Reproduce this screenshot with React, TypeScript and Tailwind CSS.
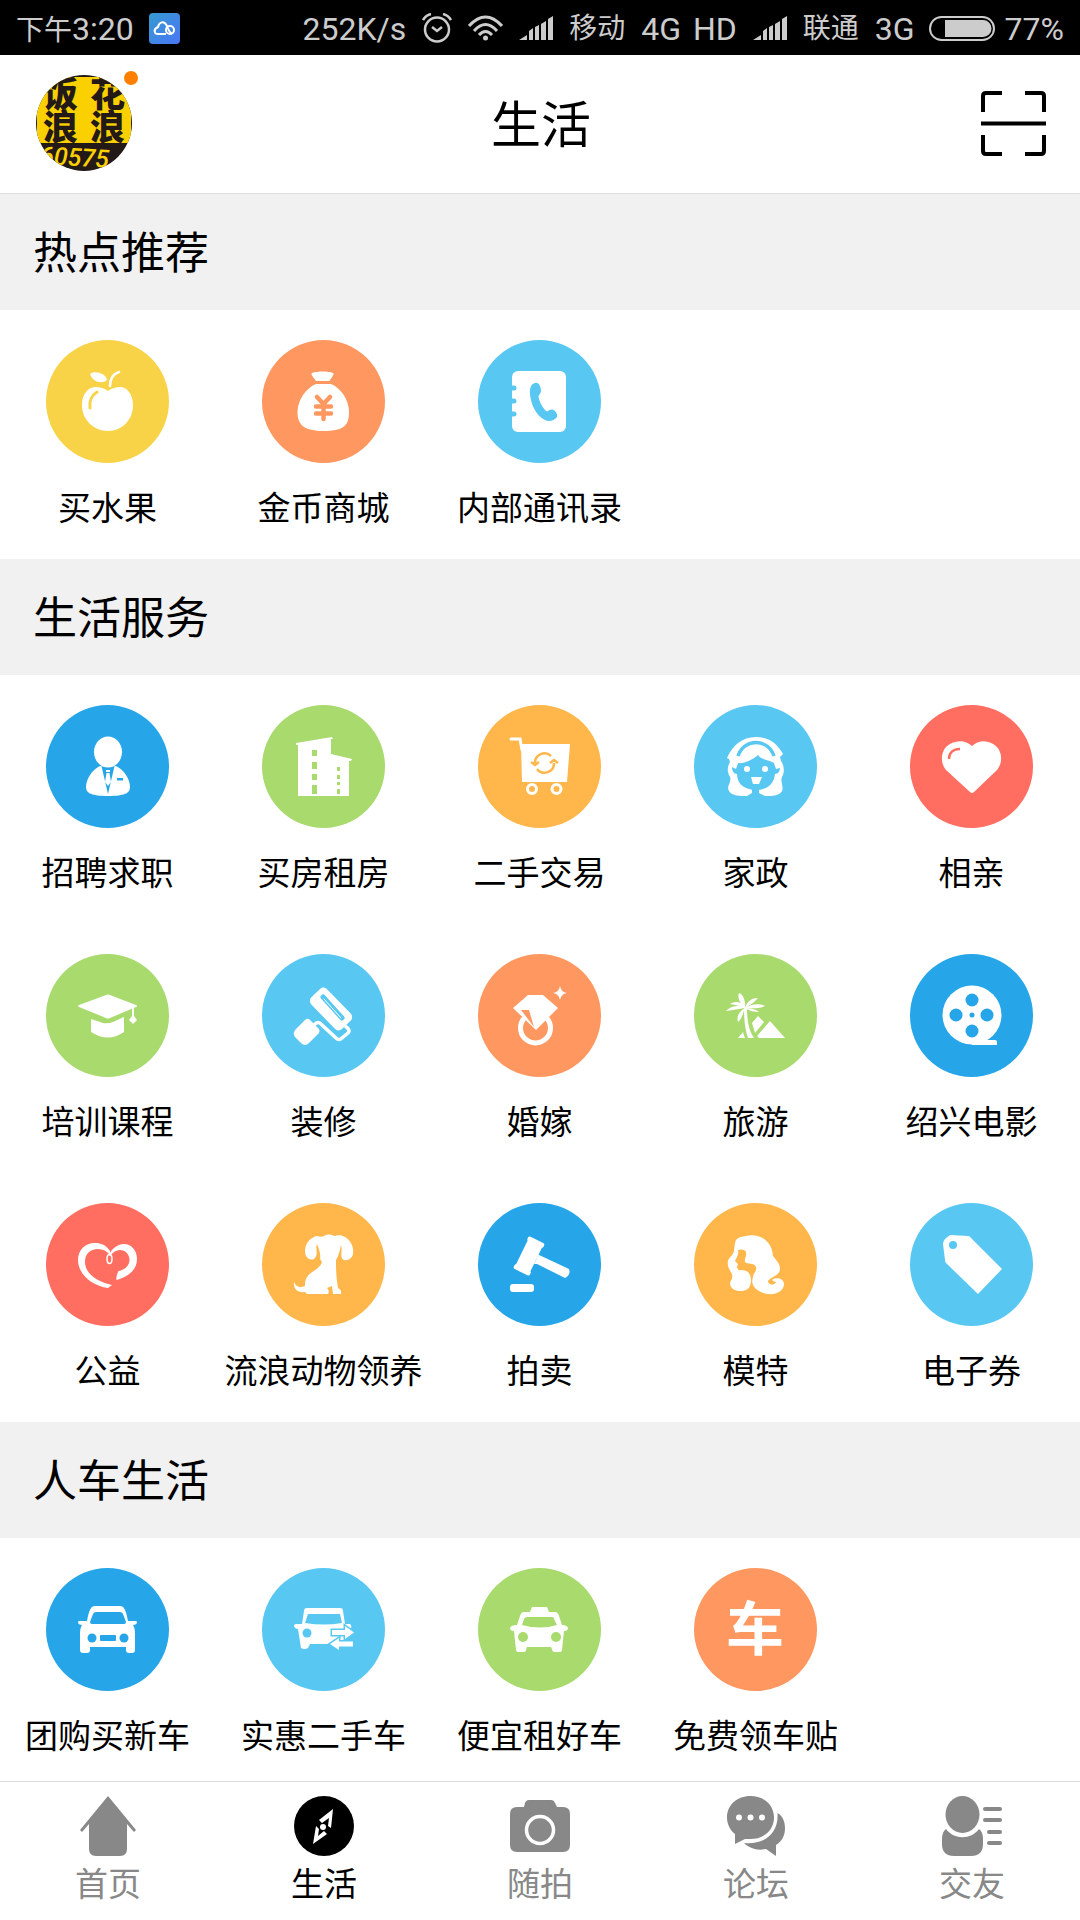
import type { ReactNode } from "react";
import { clsx } from "clsx";

const YELLOW = "#f8d347";
const ORANGE = "#ff9860";
const SKY = "#58c8f3";
const BLUE = "#26a6e8";
const GREEN = "#a8da6e";
const AMBER = "#ffb74b";
const RED = "#ff6e61";

interface Service {
  label: string;
  color: string;
  icon: ReactNode;
}

interface ServiceGroup {
  title: string;
  items: Service[];
}

// Service glyphs are white on a 123x123 disc, cut-outs use the disc colour.
const GROUPS: ServiceGroup[] = [
  {
    title: "热点推荐",
    items: [
      {
        label: "买水果",
        color: YELLOW,
        icon: (
          <>
            <path d="M62 51C58 48 54 47 50 47C42 47 36 54 36 65C36 80 48 91 62 91S87 80 87 65C87 54 81 47 74 47C70 47 66 48 62 51Z" />
            <path d="M44 34C48 30 60 33 61 40C57 44 47 43 44 34Z" />
            <path d="M64 46C64 39 67 34 73 32" fill="none" stroke="#fff" strokeWidth="2.5" strokeLinecap="round" />
            <path d="M44 68C43 61 46 55 51 52" fill="none" stroke={YELLOW} strokeWidth="3" strokeLinecap="round" />
          </>
        ),
      },
      {
        label: "金币商城",
        color: ORANGE,
        icon: (
          <>
            <path d="M50 33C56 31 66 31 71 33C73 34 69 38 67.5 41H54C52 38 48 34 50 33Z" />
            <path d="M54 44H69C79 48 87 60 87 72C87 85 82 91 62 91S35.5 85 35.5 72C35.5 60 44 48 54 44Z" />
            <path
              d="M55 57L61.5 64L68 57M61.5 64V79M54 66.5H69M54 73.5H69"
              fill="none"
              stroke={ORANGE}
              strokeWidth="4.5"
              strokeLinecap="round"
            />
          </>
        ),
      },
      {
        label: "内部通讯录",
        color: SKY,
        icon: (
          <>
            <rect x="34" y="31" width="54" height="61" rx="6" />
            <path d="M33 48H36M33 61H36M33 74H36" stroke={SKY} strokeWidth="5" strokeLinecap="round" />
            <path
              fill={SKY}
              d="M57 43C53 44 51.5 48 52 54C53 66 59 76 67 80C71 82 76 81 79 77C80 74 77 70 74 69.5C72 69.5 70 71 69 71.5C66 70 61 62 60.5 56C61.5 54 63 53 63 51C63 47 61 42 57 43Z"
            />
          </>
        ),
      },
    ],
  },
  {
    title: "生活服务",
    items: [
      {
        label: "招聘求职",
        color: BLUE,
        icon: (
          <>
            <path d="M54 61C46 65 40 74 40 82C40 88 45 91 62 91S84 88 84 82C84 74 78 65 70 61Z" />
            <path d="M55 59L62 89L69 59Z" fill={BLUE} />
            <ellipse cx="62" cy="47" rx="14" ry="15.5" />
            <path d="M60 65H64V67H60ZM60.5 68H63.5L65 77L62 81L59 77Z" />
            <rect x="71" y="73" width="6" height="2.5" fill={BLUE} />
          </>
        ),
      },
      {
        label: "买房租房",
        color: GREEN,
        icon: (
          <>
            <path d="M34 38L70 32L71 34H69V49L90 54L89 56H87V91H36V40H34Z" />
            <path
              fill={GREEN}
              d="M50 45H55V51H50ZM50 57H55V64H50ZM50 69H55V75H50ZM50 80H55V89H50ZM75 62H78V66H75ZM75 70H78V74H75ZM75 77H78V80H75ZM75 84H78V89H75Z"
            />
          </>
        ),
      },
      {
        label: "二手交易",
        color: AMBER,
        icon: (
          <>
            <path d="M43 39H92L89 77H44Z" />
            <path d="M33 34H42L44 45" fill="none" stroke="#fff" strokeWidth="3" strokeLinecap="round" />
            <circle cx="54" cy="84" r="4.5" fill="none" stroke="#fff" strokeWidth="3" />
            <circle cx="78.5" cy="84" r="4.5" fill="none" stroke="#fff" strokeWidth="3" />
            <path
              d="M57 58A9.5 9.5 0 0 1 73 51M76 58A9.5 9.5 0 0 1 59 64M53 57L57 60L61 57M72 58L76 55L80 58"
              fill="none"
              stroke={AMBER}
              strokeWidth="2.5"
            />
          </>
        ),
      },
      {
        label: "家政",
        color: SKY,
        icon: (
          <>
            <path d="M33 53C38 41 48 32 62 32S84 40 89 49L86 52L87 56C90 60 91 67 88 72C86 76 90 82 88 86C85 91 78 91 71 91L65 88V84H58V88L53 91C46 91 38 91 35 86C32 81 38 77 36 72C33 67 33 62 36 57L35 54Z" />
            <path d="M44 51C50 33 74 33 80 51" fill="none" stroke={SKY} strokeWidth="3.5" />
            <path
              fill={SKY}
              d="M44 58C50 59 58 55 64 50C66 54 74 55 80 58L82 64L86 63C86 66 84 69 81 69C80 80 72 85 62 85S43 80 43 69C40 69 38 66 38 62L42 64Z"
            />
            <path d="M58 84H65V92H58Z" fill={SKY} />
            <circle cx="53" cy="64" r="3" />
            <circle cx="71" cy="64" r="3" />
            <path d="M57 72H68L65 79H59Z" />
          </>
        ),
      },
      {
        label: "相亲",
        color: RED,
        icon: (
          <>
            <path d="M62 41C55 34 43 35 36 42C30 49 31 59 36 65L60 87Q62 89 64 87L87 65C92 59 93 49 87 42C80 35 69 34 62 41Z" />
            <path d="M39 54C39 48 43 44 50 44" fill="none" stroke={RED} strokeWidth="2.5" />
          </>
        ),
      },
      {
        label: "培训课程",
        color: GREEN,
        icon: (
          <>
            <path d="M60 41Q62 40 64 41L90 51Q92 52 90 53L64 64Q62 65 60 64L33 53Q31 52 33 51Z" />
            <path d="M45 65L57 69Q62 70 67 68L78 63V78Q62 89 45 78Z" />
            <path d="M86 54H88V62L91 66L87 70L83 66L86 62Z" />
          </>
        ),
      },
      {
        label: "装修",
        color: SKY,
        icon: (
          <>
            <rect x="47" y="44" width="44" height="22" rx="5" transform="rotate(46 69 55)" />
            <path d="M61 43L80 64" stroke={SKY} strokeWidth="5" strokeLinecap="round" />
            <path d="M62 45L79 64" stroke="#fff" strokeWidth="1" strokeLinecap="round" />
            <path
              d="M52 71Q56 66 60 71L74 84Q77 87 80 84L86 79Q89 76 83 72"
              fill="none"
              stroke="#fff"
              strokeWidth="3.5"
            />
            <path d="M43 66Q45 64 47 65L57 75Q58 77 57 79L47 89Q43 93 39 89L33 83Q30 79 34 75Z" />
          </>
        ),
      },
      {
        label: "婚嫁",
        color: ORANGE,
        icon: (
          <>
            <circle cx="57.5" cy="74" r="15" fill="none" stroke="#fff" strokeWidth="5" />
            <path d="M35 54L50 41H65L80 54L58 76Z" />
            <path d="M43 56H51L56 73Z" fill={ORANGE} />
            <path d="M82 32Q83 38 89 39Q83 40 82 46Q81 40 75 39Q81 38 82 32Z" />
          </>
        ),
      },
      {
        label: "旅游",
        color: GREEN,
        icon: (
          <>
            <path d="M51 54C42 50 36 53 32 57C39 56 45 55 51 54C47 47 41 47 36 50C42 51 47 52 51 54C52 47 49 40 45 39C43 43 46 50 51 54C53 47 58 44 64 44C61 48 56 51 51 54C57 50 65 49 71 52C64 55 57 54 51 54C56 54 62 55 65 58C60 58 56 57 51 54C46 57 42 62 44 68C48 65 49 59 51 54Z" />
            <path d="M50 54H53C53 66 55 77 60 84H54C51 76 50 65 50 54Z" />
            <path d="M76 67L91 84H65L63 82ZM64 62L70 68L61 79L58 69ZM49 78L51 84H44Z" />
          </>
        ),
      },
      {
        label: "绍兴电影",
        color: BLUE,
        icon: (
          <>
            <circle cx="62" cy="61" r="29.5" />
            <path d="M62 86H85Q87 86 87 88V91H62Z" />
            <g fill={BLUE}>
              <circle cx="62" cy="46" r="6.5" />
              <circle cx="46" cy="61" r="6.5" />
              <circle cx="77" cy="61" r="6.5" />
              <circle cx="62" cy="77" r="6.5" />
              <circle cx="62" cy="61" r="2.5" />
            </g>
          </>
        ),
      },
      {
        label: "公益",
        color: RED,
        icon: (
          <>
            <path d="M64 48C60 42 55 40 49 40C39 40 32 47 32 57C32 71 46 83 62 85L66 82C52 79 39 71 39 59C39 51 44 46 52 46C57 46 61 48 64 52Z" />
            <path d="M63 52C66 45 72 41 78 41C85 41 91 47 91 56C91 67 82 74 70.5 77C70 74 71 71 72.5 68C79 67 83.5 62 83.5 57C83.5 51 79 47 74 47C70 47 67 49 64 53Z" />
            <ellipse cx="63.5" cy="56" rx="2.5" ry="4.5" fill="none" stroke="#fff" strokeWidth="1.5" />
          </>
        ),
      },
      {
        label: "流浪动物领养",
        color: AMBER,
        icon: (
          <path d="M62 33C65 31 69 31 72 33C76 32 80 32 83 34C88 37 92 43 91 50C91 55 86 58 82 57C77 55 81 47 79 42C78 47 77 52 74 57C74 63 74 74 76 85Q80 87 79 91H71L70 83L65 85Q68 88 66 91H45L43 89C36 90 31 86 32 79C34 84 38 85 43 83C42 68 57 69 60 59L58 56C59 51 57 46 55 41C53 46 57 52 52 56C47 58 43 54 43 48C43 40 49 34 55 33C58 34 60 34 62 33Z" />
        ),
      },
      {
        label: "拍卖",
        color: BLUE,
        icon: (
          <>
            <g transform="rotate(26 51 53)">
              <rect x="43" y="38" width="16" height="30" />
              <rect x="42" y="35" width="18" height="5" rx="2" />
              <rect x="42" y="66" width="18" height="5" rx="2" />
              <path d="M59 48L63 50V56L59 58Z" />
            </g>
            <path d="M60 51.5L91 66Q93 72 87 75L59 61Z" />
            <rect x="32" y="81" width="24" height="8" rx="3" />
          </>
        ),
      },
      {
        label: "模特",
        color: AMBER,
        icon: (
          <path d="M41 40C42 33 50 34 52 33C65 30 78 37 79 53C83 58 86 61 86 66C86 73 76 74 74 78C74 82 80 83 82 79Q80 79 78 77C81 74 90 75 90 81C90 88 82 92 74 91C62 89 56 82 59 74C59 70 63 69 62 64C60 59 53 62 51 59C50 56 53 53 52 49C51 46 46 46 44 47C45 51 43 54 41 58L44 61L43 64Q44 68 47 67C54 67 57 71 57 77C57 86 52 88 46 88C39 88 36 84 36 80C37 76 39 76 38 71C35 66 33 63 34 58C35 54 40 52 40 47Z" />
        ),
      },
      {
        label: "电子券",
        color: SKY,
        icon: (
          <>
            <path d="M40 32L58 33Q60 33 61 35L92 66L68 91L36 60Q35 59 35 57L33 41Q33 38 35 36Z" />
            <circle cx="43" cy="42" r="4" fill={SKY} />
          </>
        ),
      },
    ],
  },
  {
    title: "人车生活",
    items: [
      {
        label: "团购买新车",
        color: BLUE,
        icon: (
          <>
            <path d="M49 38H74C78 38 80 42 82 53H90Q91 53 91 55Q90 57 87 57Q89 60 89 66V82Q89 85 86 85H83Q80 85 80 82V79H44V82Q44 85 41 85H37Q34 85 34 82V66Q34 60 36 57Q33 57 32 55Q32 53 33 53H41C43 42 45 38 49 38Z" />
            <g fill={BLUE}>
              <path d="M50 44H74Q76 44 77 46L80 54Q80 56 78 56H46Q44 56 44 54L47 46Q48 44 50 44Z" />
              <circle cx="46" cy="70" r="4.5" />
              <circle cx="78" cy="70" r="4.5" />
              <rect x="54" y="67" width="16" height="6" rx="1" />
            </g>
          </>
        ),
      },
      {
        label: "实惠二手车",
        color: SKY,
        icon: (
          <>
            <path d="M45 40H78Q81 40 81 43L83 56H88Q90 57 89 61H87L83 76H48L46 80Q42 82 39 80L36 61Q33 61 32 58Q32 56 34 56H40L42 43Q42 40 45 40Z" />
            <path d="M46 46H78L80 55Q62 58 43 55Z" fill={SKY} />
            <circle cx="45" cy="65" r="4.5" fill={SKY} />
            <g stroke={SKY} strokeWidth="3" paintOrder="stroke">
              <path d="M70 62H83V58L92 64.5L83 71V67H70Z" />
              <path d="M91 73.5H77V70L68 76L77 82V78.5H91Z" />
            </g>
          </>
        ),
      },
      {
        label: "便宜租好车",
        color: GREEN,
        icon: (
          <>
            <path d="M54 39H69L71 44H77Q80 44 81 48L84 57Q89 57 90 60Q90 63 86 63L84 82Q84 84 81 84H77Q74 84 74 81L73 79H49L48 82Q48 84 45 84H41Q38 84 38 82L36 63Q32 63 32 60Q33 57 39 57L42 48Q43 44 46 44H52Z" />
            <g fill={GREEN}>
              <path d="M49 49H74Q76 49 76 51L79 57Q62 62 44 57L46 51Q47 49 49 49Z" />
              <circle cx="45" cy="69" r="5" />
              <circle cx="78" cy="69" r="5" />
            </g>
          </>
        ),
      },
      {
        label: "免费领车贴",
        color: ORANGE,
        icon: (
          <text x="61" y="82" textAnchor="middle" fontSize="58" fontWeight="700">
            车
          </text>
        ),
      },
    ],
  },
];

const TABS = [
  {
    label: "首页",
    icon: <path d="M30 0L58 34L56 36L49 28V53Q49 60 42 60H18Q11 60 11 53V28L4 36L2 34Z" />,
  },
  {
    label: "生活",
    icon: (
      <>
        <circle cx="30" cy="30" r="30" />
        <g fill="#fff">
          <path d="M39 13L37 32L34 30L35 22L28 27L25 24Z" />
          <path d="M19 48L22 30L25 33L24 40L30 35L33 38Z" />
          <circle cx="29" cy="31" r="3" />
        </g>
      </>
    ),
  },
  {
    label: "随拍",
    icon: (
      <>
        <path d="M19 4H41Q44 4 45 7L47 11H53Q60 11 60 18V49Q60 56 53 56H7Q0 56 0 49V18Q0 11 7 11H14L15 7Q16 4 19 4Z" />
        <circle cx="30" cy="34" r="13.5" fill="none" stroke="#fff" strokeWidth="3.5" />
      </>
    ),
  },
  {
    label: "论坛",
    icon: (
      <>
        <path d="M24.5 0C38 0 48 9 48 21.5S38 43 24.5 43H19L9 48V38C4 34 1 28 1 21.5C1 9 11 0 24.5 0Z" />
        <path d="M51.5 17C57 20 59 26 59 32C59 40 56 45 50 49V60L40 53C31 55 23 52 18 47C38 49 53 38 51.5 17Z" />
        <g fill="#fff">
          <circle cx="13" cy="21.5" r="3" />
          <circle cx="24.5" cy="21.5" r="3" />
          <circle cx="36" cy="21.5" r="3" />
        </g>
      </>
    ),
  },
  {
    label: "交友",
    icon: (
      <>
        <ellipse cx="20.5" cy="18.5" rx="17" ry="18.5" />
        <path d="M4 33C12 44 29 44 37 33Q41 36 41 43V48Q41 60 29 60H12Q0 60 0 48V43Q0 36 4 33Z" />
        <path
          d="M43 13H58M43 24H58M47 36H58M47 47H58"
          stroke="currentColor"
          strokeWidth="4"
          strokeLinecap="round"
        />
      </>
    ),
  },
];

function Signal() {
  return (
    <svg viewBox="0 0 34 24" className="h-6 w-[34px] fill-current" aria-hidden="true">
      <path d="M0 24L8 19V24ZM10 15L14 12V24H10ZM16 11L20 9V24H16ZM22 8L27 5V24H22ZM29 3L34 0V24H29Z" />
    </svg>
  );
}

function StatusBar() {
  return (
    <div className="flex h-[55px] shrink-0 items-center justify-between bg-black px-4 pt-px text-[32px] leading-none text-[#cccccc]">
      <div className="flex items-center gap-[15px]">
        <span className="pt-0.5">
          <span className="text-[28px]">下午</span>3:20
        </span>
        <svg viewBox="0 0 31 31" className="size-[31px]" aria-hidden="true">
          <defs>
            <linearGradient id="cloud" x1="0" y1="0" x2="1" y2="1">
              <stop offset="0" stopColor="#359bd0" />
              <stop offset="1" stopColor="#4a76f5" />
            </linearGradient>
          </defs>
          <rect width="31" height="31" rx="4" fill="url(#cloud)" />
          <g fill="none" stroke="#fff" strokeWidth="2">
            <path d="M17 21H9C5 21 4 16 9 14C10 9 15 7 18 13C19 16 20 19 23 21" />
            <circle cx="21" cy="17" r="4" />
          </g>
        </svg>
      </div>
      <div className="flex items-center gap-4">
        <span className="pt-0.5">252K/s</span>
        <svg viewBox="0 0 30 30" className="size-[30px]" fill="none" stroke="currentColor" strokeWidth="2.5" aria-hidden="true">
          <circle cx="15" cy="16.5" r="12" />
          <path d="M10 14L15 18L20 14M1 7Q4 2 9 1M29 7Q26 2 21 1" />
        </svg>
        <svg viewBox="0 0 35 26" className="h-[26px] w-[35px]" fill="none" stroke="currentColor" strokeWidth="3" aria-hidden="true">
          <path d="M1 11Q17.5 -7 34 11M6 16Q17.5 3 29 16M11 20Q17.5 13 24 20" />
          <circle cx="17.5" cy="23" r="2.5" fill="currentColor" stroke="none" />
        </svg>
        <Signal />
        <span className="pt-0.5 text-[28px]">移动</span>
        <span className="pt-0.5">4G</span>
        <span className="-ml-1 pt-0.5">HD</span>
        <Signal />
        <span className="pt-0.5 text-[28px]">联通</span>
        <span className="pt-0.5">3G</span>
        <svg viewBox="0 0 66 25" className="-ml-0.5 h-[25px] w-[66px]" aria-hidden="true">
          <rect x="1" y="1" width="64" height="23" rx="11.5" fill="none" stroke="currentColor" strokeWidth="2" />
          <path d="M16 4H54A8.5 8.5 0 0 1 54 21H16Z" fill="currentColor" />
        </svg>
        <span className="-ml-1.5 pt-0.5">77%</span>
      </div>
    </div>
  );
}

function Header() {
  return (
    <header className="grid h-[139px] shrink-0 grid-cols-3 items-center border-b border-[#dddddd] pr-[34px] pb-0.5 pl-9">
      <button type="button" aria-label="个人中心" className="relative size-24">
        <svg viewBox="0 0 96 96" className="size-24 rounded-full font-black">
          <rect width="96" height="96" fill="#231a17" />
          <rect x="1" y="2" width="94" height="66" fill="#fad000" />
          <text fill="#231a17" fontSize="35">
            <tspan x="7 54" y="32">饭花</tspan>
            <tspan x="7 54" y="65">浪浪</tspan>
          </text>
          <text x="4" y="91" fill="#fad000" fontSize="25" fontWeight="500" fontStyle="italic" transform="rotate(3 40 84)">
            60575
          </text>
        </svg>
        <span className="absolute -top-1 -right-1.5 size-3.5 rounded-full bg-[#ff8000]" />
      </button>
      <h1 className="pt-1.5 text-center text-[50px] leading-[72px]">生活</h1>
      <button type="button" aria-label="扫一扫" className="justify-self-end">
        <svg viewBox="0 0 65 65" className="size-[65px]" fill="none" stroke="#000" strokeWidth="4">
          <path d="M2 21V5Q2 2 5 2H21M44 2H60Q63 2 63 5V21M63 44V60Q63 63 60 63H44M21 63H5Q2 63 2 60V44M0 32.5H65" />
        </svg>
      </button>
    </header>
  );
}

function ServiceLink({ label, color, icon }: Service) {
  return (
    <a href="#" className="flex flex-col items-center gap-[21px] pt-[30px] pr-px pb-[25px]">
      <svg viewBox="0 0 123 123" className="size-[123px] fill-white" aria-hidden="true">
        <circle cx="61.5" cy="61.5" r="61.5" fill={color} />
        {icon}
      </svg>
      <span className="text-[33px] leading-[50px] whitespace-nowrap">{label}</span>
    </a>
  );
}

export default function App() {
  return (
    <div className="flex h-screen flex-col bg-white font-[Roboto,'Noto_Sans_CJK_SC',sans-serif] text-black">
      <StatusBar />
      <Header />
      <main className="min-h-0 flex-1 overflow-y-auto [scrollbar-width:none]">
        {GROUPS.map((group) => (
          <section key={group.title}>
            <h2 className="bg-[#f1f1f1] px-[33px] pt-7 pb-6 text-[44px] leading-[64px]">{group.title}</h2>
            <div className="grid grid-cols-5">
              {group.items.map((item) => (
                <ServiceLink key={item.label} {...item} />
              ))}
            </div>
          </section>
        ))}
      </main>
      <nav className="grid shrink-0 grid-cols-5 border-t border-[#dddddd] bg-white pt-3.5 pb-2.5">
        {TABS.map(({ label, icon }) => (
          <a
            key={label}
            href="#"
            aria-current={label === "生活" ? "page" : undefined}
            className={clsx("flex flex-col items-center gap-1", label === "生活" ? "text-black" : "text-[#888888]")}
          >
            <svg viewBox="0 0 60 60" className="size-[60px] fill-current" aria-hidden="true">
              {icon}
            </svg>
            <span className="text-[33px] leading-[50px]">{label}</span>
          </a>
        ))}
      </nav>
    </div>
  );
}
